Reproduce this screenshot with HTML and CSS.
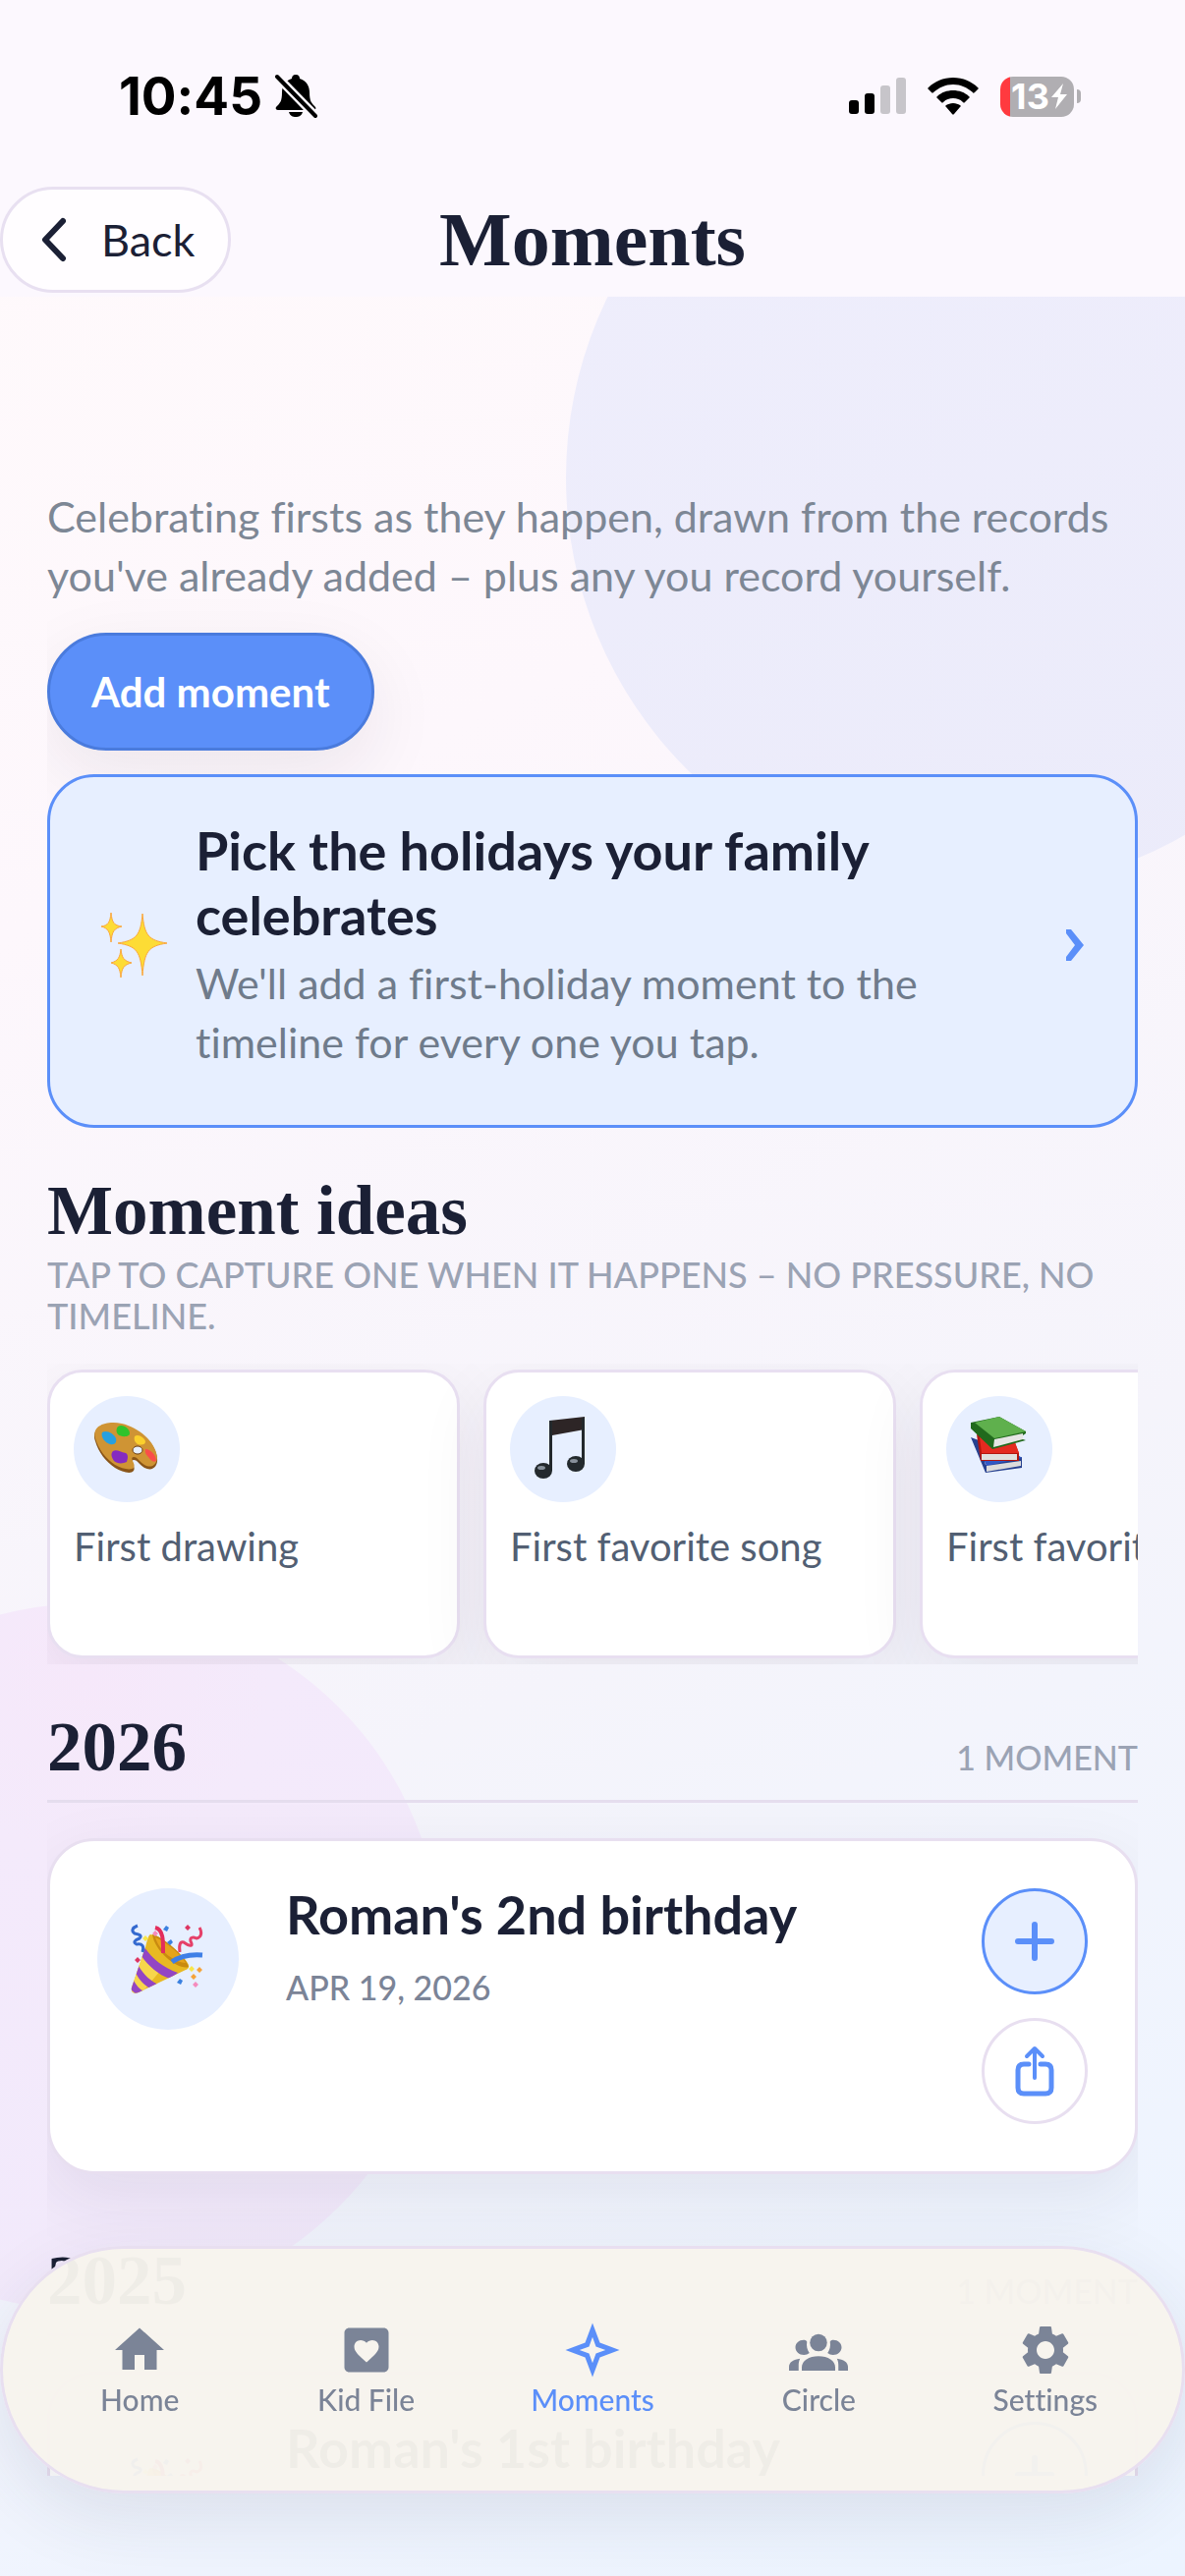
FILE: index.html
```html
<!DOCTYPE html>
<html lang="en">

<head>
    <meta charset="UTF-8">
    <meta name="viewport" content="width=device-width, initial-scale=1.0">
    <title>Moments</title>
    <link rel="stylesheet" href="styles.css">
</head>

<body>
    <div class="backdrop">
        <div class="blob blob-blue"></div>
        <div class="blob blob-pink"></div>
    </div>
    <div class="app">
        <header class="top">
            <div class="status">
                <div class="status-left">
                    <span class="time">10:45</span>
                    <svg width="44" height="46" viewBox="0 0 44 46">
                        <path d="M22 1c3 0 4 2 4 4 7 2 10 8 10 14 0 9 2 11 6 15 1 1 0 3-2 3H4c-2 0-3-2-2-3 4-4 6-6 6-15 0-6 3-12 10-14 0-2 1-4 4-4zM15 39h14c-1 4-4 5-7 5s-6-1-7-5z" />
                        <path class="slash" d="M3 3l39 40" />
                        <path class="slash-line" d="M3 3l39 40" />
                    </svg>
                </div>
                <div class="status-right">
                    <svg width="58" height="38" viewBox="0 0 58 38">
                        <rect x="0" y="23" width="10" height="14" rx="3" />
                        <rect x="16" y="16" width="10" height="21" rx="3" />
                        <rect x="32" y="8" width="10" height="29" rx="3" fill="#c7c5ca" />
                        <rect x="48" y="0" width="10" height="37" rx="3" fill="#c7c5ca" />
                    </svg>
                    <svg width="52" height="38" viewBox="0 0 52 38">
                        <path d="M26 0c10 0 19 4 25 10 1 1 1 1 0 2l-3 3c-1 1-2 1-2 0C40 10 34 7 26 7S12 10 6 15c-1 1-1 1-2 0l-3-3c-1-1-1-1 0-2C7 4 16 0 26 0z" />
                        <path d="M26 13c6 0 12 2 16 6 1 1 1 1 0 2l-4 4c-1 1-1 1-2 0-3-3-6-4-10-4s-7 1-10 4c-1 1-1 1-2 0l-4-4c-1-1-1-1 0-2 4-4 10-6 16-6z" />
                        <path d="M26 26c3 0 5 1 7 2 1 1 1 1 0 2l-6 7c-1 1-1 1-2 0l-6-7c-1-1-1-1 0-2 2-1 4-2 7-2z" />
                    </svg>
                    <div class="battery">
                        <span>13</span>
                        <svg width="16" height="26" viewBox="0 0 16 26">
                            <path d="M12 0L0 14h7L4 26l12-15H9z" fill="#fff" />
                        </svg>
                    </div>
                </div>
            </div>
            <div class="bar">
                <a class="back" href="#">
                    <svg width="30" height="46" viewBox="0 0 30 46">
                        <path d="M25 4L7 23l18 19" />
                    </svg>
                    Back
                </a>
                <h1>Moments</h1>
            </div>
        </header>

        <main class="content">
            <p class="intro">Celebrating firsts as they happen, drawn from the records you've already added – plus any you record yourself.</p>
            <button class="add" type="button">Add moment</button>

            <a class="pick" href="#">
                <svg width="78" height="78" viewBox="0 0 78 78">
                    <g class="spark">
                        <path d="M46 7c2 22 6 27 25 30-19 3-23 8-25 33-2-25-6-30-25-33 19-3 23-8 25-30z" />
                        <path d="M14 6c1 10 3 13 11 14-8 2-10 5-11 16-1-11-3-14-10-16 7-1 9-4 10-14z" />
                        <path d="M24 43c1 9 3 12 11 14-8 2-10 5-11 15-1-10-3-13-10-15 7-2 9-5 10-14z" />
                    </g>
                </svg>
                <div class="pick-text">
                    <h2>Pick the holidays your family celebrates</h2>
                    <p>We'll add a first-holiday moment to the timeline for every one you tap.</p>
                </div>
                <svg width="24" height="36" viewBox="0 0 24 36">
                    <path d="M2 2h5l13 16L7 34H2v-4l9-12L2 6z" fill="#5b8ff9" />
                </svg>
            </a>

            <section class="ideas">
                <h2>Moment ideas</h2>
                <p class="label">Tap to capture one when it happens – no pressure, no timeline.</p>
                <div class="rail">
                    <button class="idea" type="button">
                        <svg class="disc" viewBox="0 0 108 108">
                            <path d="M22 46C17 31 34 25 49 29c17 4 34 18 36 34 1 9-5 14-13 10-5-3-7-8-11-8-5 1 3 7 0 11-3 4-12 1-19-3-9-6-17-16-20-27z" fill="#8a5518" />
                            <path d="M22 43C18 29 35 25 49 28c17 4 34 18 36 34 0 8-6 12-13 8-5-3-7-8-11-8-5 1 3 7 0 11-3 3-12 1-19-3-9-6-17-16-20-27z" fill="#cf9434" />
                            <ellipse cx="65" cy="55" rx="5" ry="4" fill="#e7efff" stroke="#6b3f12" stroke-width="1" />
                            <path d="M29 37c4-3 12 1 14 6 1 4-1 7-6 6-5-1-10-8-8-12z" fill="#27a0e0" />
                            <path d="M45 31c5-3 12 2 12 7 0 4-9 4-12 1-2-2-2-6 0-8z" fill="#2fc32b" />
                            <path d="M62 41c4-3 10 2 11 5 0 4-4 4-8 3-3-2-4-5-3-8z" fill="#fbd02c" />
                            <path d="M40 56c4-2 7 1 13 2 3 2 2 6 1 9-4 2-10 2-13-1-2-3-4-7-1-10z" fill="#862bc0" />
                            <path d="M73 54c5 0 11 6 11 12-3 2-6-1-8-4-2-2-4-5-3-8z" fill="#fa4e49" />
                        </svg>
                        First drawing
                    </button>
                    <button class="idea" type="button">
                        <svg class="disc" viewBox="0 0 108 108">
                            <path d="M40 25l36-4v13l-33 6z" fill="#2d2526" />
                            <path d="M40 25h3v51h-3zM73 22h3v47h-3z" fill="#23282c" />
                            <ellipse cx="34" cy="76" rx="9" ry="8" fill="#23292d" />
                            <ellipse cx="67" cy="69" rx="9" ry="8" fill="#23292d" />
                            <ellipse cx="32" cy="73" rx="4" ry="2" fill="#87909a" />
                            <ellipse cx="65" cy="66" rx="4" ry="2" fill="#87909a" />
                        </svg>
                        First favorite song
                    </button>
                    <button class="idea" type="button">
                        <svg class="disc" viewBox="0 0 108 108">
                            <path d="M25 42l8 3 7 25 37-8v11L40 78z" fill="#27418f" />
                            <path d="M33 54l35 2 9 7-36 8z" fill="#3158c4" />
                            <path d="M41 71l35-5v5l-35 6z" fill="#dcdcdc" />
                            <path d="M31 39l39 9 4 10v8H35z" fill="#b3160f" />
                            <path d="M34 42l36 5 4 11H36z" fill="#e42a20" />
                            <path d="M36 59h36v6H36z" fill="#e0e0de" />
                            <path d="M25 27l29-6 27 15v2l-3 2v4l3 1-34 9-22-21z" fill="#216a1d" />
                            <path d="M29 27l25-6 27 15-32 7z" fill="#5fb04d" />
                            <path d="M49 44l29-6v6l-30 8z" fill="#e6e6e4" />
                        </svg>
                        First favorite book
                    </button>
                </div>
            </section>

            <section class="year">
                <div class="year-head">
                    <h2>2026</h2>
                    <span class="label">1 moment</span>
                </div>
                <article class="card">
                    <svg class="disc" viewBox="0 0 144 144">
                        <use href="#popper" />
                    </svg>
                    <div class="card-text">
                        <h3>Roman's 2nd birthday</h3>
                        <time datetime="2026-04-19">Apr 19, 2026</time>
                    </div>
                    <div class="actions">
                        <button class="round plus" type="button" aria-label="Add">
                            <svg width="48" height="48" viewBox="0 0 48 48">
                                <path d="M24 7v34M7 24h34" stroke-width="6" />
                            </svg>
                        </button>
                        <button class="round" type="button" aria-label="Share">
                            <svg width="48" height="54" viewBox="0 0 48 54">
                                <path d="M18 20h-5c-4 0-6 2-6 6v18c0 4 2 6 6 6h22c4 0 6-2 6-6V26c0-4-2-6-6-6h-5" stroke-width="5" stroke-linecap="butt" />
                                <path d="M24 34V5M16 12l8-8 8 8" stroke-width="4" />
                            </svg>
                        </button>
                    </div>
                </article>
            </section>

            <section class="year">
                <div class="year-head">
                    <h2>2025</h2>
                    <span class="label">1 moment</span>
                </div>
                <article class="card">
                    <svg class="disc" viewBox="0 0 144 144">
                        <use href="#popper" />
                    </svg>
                    <div class="card-text">
                        <h3>Roman's 1st birthday</h3>
                    </div>
                    <div class="actions">
                        <button class="round plus" type="button" aria-label="Add">
                            <svg width="48" height="48" viewBox="0 0 48 48">
                                <path d="M24 7v34M7 24h34" stroke-width="6" />
                            </svg>
                        </button>
                    </div>
                </article>
            </section>
        </main>
    </div>

    <nav class="tabs">
        <a href="#">
            <svg viewBox="0 0 24 24">
                <path d="M10 20v-6h4v6h5v-8h3L12 3 2 12h3v8z" />
            </svg>
            Home
        </a>
        <a href="#">
            <svg viewBox="0 0 24 24">
                <path fill-rule="evenodd" d="M5 3h14c1.1 0 2 .9 2 2v14c0 1.100-.9 2-2 2H5c-1.100 0-2-.9-2-2V5c0-1.100.9-2 2-2zM12 17l-.7-.6C8.600 14 7 12.500 7 10.600 7 9.100 8.200 8 9.600 8c.9 0 1.800.4 2.400 1.100C12.600 8.400 13.500 8 14.400 8 15.800 8 17 9.100 17 10.600c0 1.900-1.600 3.400-4.300 5.800z" />
            </svg>
            Kid File
        </a>
        <a class="current" href="#">
            <svg viewBox="0 0 24 24">
                <path fill-rule="evenodd" d="M12 1l3 8 8 3-8 3-3 8-3-8-8-3 8-3zM12 6.700L10.600 10.600 6.700 12l3.900 1.400L12 17.300l1.400-3.900L17.300 12l-3.900-1.400z" />
            </svg>
            Moments
        </a>
        <a href="#">
            <svg viewBox="0 0 24 24">
                <circle cx="12" cy="9" r="3.500" />
                <path d="M5.200 20.400v-1.400c0-2.600 2.900-4.500 6.800-4.500s6.800 1.900 6.800 4.500v1.400z" />
                <path d="M7.300 8.600c-.3 1.800.1 3.400 1 4.600-.6.500-1.400.8-2.200.8-2 0-3.500-1.400-3.500-3.100s1.500-3 3.300-3c.5 0 1 .1 1.400.7zM16.700 8.600c.3 1.800-.1 3.400-1 4.600.6.500 1.400.8 2.200.8 2 0 3.500-1.400 3.500-3.100s-1.500-3-3.300-3c-.5 0-1 .1-1.400.7z" />
                <path d="M4.500 15.500C1.800 15.800 0 17 0 18.800v1.600h3.900v-2c0-1.100.1-1.900.6-2.900zM19.500 15.500c2.700.3 4.500 1.500 4.500 3.300v1.600h-3.900v-2c0-1.100-.1-1.900-.6-2.900z" />
            </svg>
            Circle
        </a>
        <a href="#">
            <svg viewBox="0 0 24 24">
                <path d="M19.140 12.940c.04-.3.060-.61.060-.94 0-.32-.02-.64-.07-.94l2.030-1.580c.18-.14.23-.41.120-.61l-1.920-3.320c-.12-.22-.37-.29-.59-.22l-2.390.96c-.5-.38-1.030-.7-1.620-.94l-.36-2.540c-.04-.24-.24-.41-.48-.41h-3.840c-.24 0-.43.17-.47.41l-.36 2.540c-.59.24-1.130.57-1.620.94l-2.390-.96c-.22-.08-.47 0-.59.22L2.740 8.870c-.12.21-.08.47.12.61l2.030 1.580c-.05.3-.09.63-.09.94s.02.64.07.94l-2.030 1.580c-.18.14-.23.41-.12.61l1.920 3.320c.12.22.37.29.59.22l2.390-.96c.5.38 1.030.7 1.620.94l.36 2.540c.05.24.24.41.48.41h3.840c.24 0 .44-.17.47-.41l.36-2.540c.59-.24 1.130-.56 1.620-.94l2.390.96c.22.08.47 0 .59-.22l1.920-3.320c.12-.22.070-.47-.12-.61l-2.010-1.580zM12 15.600c-1.980 0-3.600-1.620-3.600-3.600s1.620-3.600 3.600-3.600 3.600 1.620 3.600 3.600-1.620 3.600-3.600 3.600z" />
            </svg>
            Settings
        </a>
    </nav>

    <!-- shared artwork -->
    <svg class="defs" width="0" height="0">
        <defs>
            <clipPath id="cone">
                <path d="M54 47c-2 1-3 5-5 13L35 101c-1 5 2 7 7 5l48-23c5-2 4-6-3-13-10-11-25-23-33-23z" />
            </clipPath>
            <g id="popper">
                <g clip-path="url(#cone)">
                    <path d="M30 40h70v70H30z" fill="#e8b923" />
                    <path d="M44 60l20 24-20 24-14-4z" fill="#f7d64c" />
                    <path d="M48 60c8 12 20 21 34 26l-8 6C62 88 52 79 45 69zM42 79c5 9 13 16 22 20l-8 4c-8-4-13-9-17-17zM37 94c3 5 6 9 11 11l-7 4-8-7z" fill="#9345c4" />
                </g>
                <path d="M56 47c9 1 34 22 37 33-9 4-34-14-37-33z" fill="#c98a10" />
                <path d="M59 50c9 3 27 18 31 26-12-1-27-12-31-26z" fill="#e6a41b" />
                <g fill="none" stroke-width="4">
                    <path d="M67 66c0-10 1-24-8-26" stroke="#e32d5c" />
                    <path d="M76 75c8-6 18-8 31-7" stroke="#3f7fe6" stroke-width="5" />
                    <path d="M41 38c-5 2-7 5-3 8 5 1 8 2 5 5-5 2-7 4-3 6 6-1 8 2 6 8" stroke="#3469cf" stroke-width="3" />
                    <path d="M84 65c-1-7 0-11 4-10 7 5 10 4 7-1-1-4 2-5 6-3 5-1 6-6 3-11" stroke="#e54069" stroke-width="3" />
                </g>
                <path d="M70 38l3 2-2 4-4-2zM75 52l2 3-3 3-3-3zM84 92l3 2-2 4-4-2z" fill="#3a80e0" />
                <path d="M49 48l3 3-3 3-3-3zM96 79l3 3-3 3-3-3z" fill="#f7e64a" />
                <path d="M92 37l3 3-3 3-3-3zM41 70l3 3-3 3-3-3z" fill="#dd3561" />
                <path d="M59 43l3 3-3 3-3-3zM100 95l3 3-3 3-3-3z" fill="#f58bbd" />
                <path d="M104 80l3 3-3 3-3-3zM98 87l3 3-3 3-3-3z" fill="#f5a33a" />
            </g>
        </defs>
    </svg>
</body>

</html>
```
FILE: styles.css
```css
* {
    box-sizing: border-box;
    margin: 0;
    padding: 0;
}

body {
    position: relative;
    height: 100vh;
    overflow: hidden;
    background: linear-gradient(155deg, #fffafb 0%, #fdf7fc 30%, #f5f4fb 62%, #eff4fe 85%, #ecf4ff 100%);
    color: #1b2035;
    font-family: Lato, "Open Sans", sans-serif;
    font-size: 43px;
    font-variant-ligatures: none;
    line-height: 60px;
}

a {
    color: inherit;
    text-decoration: none;
}

button {
    font: inherit;
    cursor: pointer;
}

svg {
    flex-shrink: 0;
}

/* background shapes */
.backdrop {
    position: absolute;
    inset: 0;
    overflow: hidden;
}

.blob {
    position: absolute;
    border-radius: 50%;
}

.blob-blue {
    top: 66px;
    right: -210px;
    width: 840px;
    height: 840px;
    background: linear-gradient(160deg, #efeefc, #ebebfa);
}

.blob-pink {
    bottom: 270px;
    left: -270px;
    width: 720px;
    height: 720px;
    background: radial-gradient(circle at 50% 10%, #f6e8fa, #f4eafb 25%, #f1e9fb);
}

.defs {
    position: absolute;
}

.app {
    position: relative;
    display: flex;
    flex-direction: column;
    height: 100%;
    padding-bottom: 102px;
}

/* status bar and title */
.top {
    background: #fcf8fe;
    padding-bottom: 4px;
}

.status {
    display: flex;
    justify-content: space-between;
    align-items: center;
    height: 190px;
    padding: 6px 106px 0 121px;
}

.status-left,
.status-right {
    display: flex;
    align-items: center;
    gap: 22px;
}

.status-left {
    gap: 12px;
}

.time {
    color: #000;
    font-family: Inter, sans-serif;
    font-size: 53px;
    font-weight: 700;
}

.slash {
    stroke: #fcf8fe;
    stroke-width: 9;
}

.slash-line {
    stroke: #000;
    stroke-width: 4;
    stroke-linecap: round;
}

.battery {
    position: relative;
    display: flex;
    align-items: center;
    justify-content: center;
    gap: 2px;
    width: 75px;
    height: 41px;
    margin-right: 7px;
    padding-left: 4px;
    border-radius: 13px;
    background: linear-gradient(90deg, #ff3a3f 10px, #b0aeb2 10px);
    color: #fff;
    font-family: Inter, sans-serif;
    font-size: 36px;
    font-weight: 700;
}

.battery::after {
    content: "";
    position: absolute;
    right: -7px;
    width: 4px;
    height: 14px;
    border-radius: 0 4px 4px 0;
    background: #b0aeb2;
}

.bar {
    display: grid;
    grid-template-columns: 1fr auto 1fr;
    align-items: center;
}

.back {
    display: flex;
    align-items: center;
    justify-self: start;
    gap: 34px;
    height: 108px;
    padding: 0 34px 0 36px;
    border: 3px solid #e8e0f1;
    border-radius: 54px;
    background: #fffdff;
    font-size: 45px;
}

.back path {
    fill: none;
    stroke: #1b2035;
    stroke-width: 6;
    stroke-linecap: round;
    stroke-linejoin: round;
}

h1,
.ideas h2,
.year-head h2 {
    font-family: "Liberation Serif", serif;
    font-weight: 700;
}

h1 {
    font-size: 78px;
    line-height: 84px;
}

.ideas h2,
.year-head h2 {
    font-size: 71px;
    line-height: 84px;
}

.content {
    flex: 1;
    min-height: 0;
    margin: 0 48px;
    padding-top: 194px;
    overflow: hidden;
}

.intro {
    color: #7d8795;
}

.add {
    display: block;
    height: 120px;
    margin: 28px 0 24px;
    padding: 0 42px;
    border: 3px solid #4a7bdd;
    border-radius: 60px;
    background: #5b8ff9;
    box-shadow: 0 24px 72px rgba(40, 30, 50, .08);
    color: #fff;
    font-size: 42px;
    font-weight: 700;
}

.pick {
    display: flex;
    align-items: center;
    gap: 22px;
    padding: 42px 48px 54px;
    border: 3px solid #5b8ff9;
    border-radius: 48px;
    background: #e7efff;
}

.spark {
    fill: #fddc35;
    stroke: #fba73f;
    stroke-width: 1;
}

.pick-text {
    flex: 1;
}

.pick h2 {
    margin-bottom: 6px;
    font-size: 54px;
    line-height: 66px;
}

.pick p {
    color: #6f7b8b;
}

.label {
    color: #9ba3b4;
    font-size: 36px;
    font-weight: 500;
    line-height: 42px;
    text-transform: uppercase;
}

.ideas {
    margin: 42px 0;
}

.ideas .label {
    margin: 2px 0 28px;
}

.rail {
    display: flex;
    gap: 24px;
    padding: 6px 0;
    overflow: hidden;
}

.idea {
    display: flex;
    flex: none;
    flex-direction: column;
    align-items: flex-start;
    gap: 21px;
    width: 420px;
    height: 294px;
    padding: 24px;
    border: 3px solid #e8dff1;
    border-radius: 36px;
    background: #fff;
    box-shadow: 0 24px 72px rgba(40, 30, 50, .07);
    color: #525f73;
    font-size: 40px;
    line-height: 48px;
    text-align: left;
}

.disc {
    width: 108px;
    height: 108px;
    border-radius: 50%;
    background: #e7efff;
}

/* timeline */
.year {
    margin-bottom: 66px;
}

.year-head {
    display: flex;
    justify-content: space-between;
    align-items: baseline;
    margin-bottom: 36px;
    padding-bottom: 12px;
    border-bottom: 3px solid #e5ddee;
}

.year-head .label {
    font-size: 34px;
}

.card {
    display: flex;
    align-items: flex-start;
    gap: 48px;
    padding: 48px;
    border: 3px solid #e8dff0;
    border-radius: 48px;
    background: #fff;
    box-shadow: 0 24px 72px rgba(40, 40, 60, .08);
}

.card .disc {
    width: 144px;
    height: 144px;
}

.card-text {
    flex: 1;
}

.card h3 {
    margin-bottom: 26px;
    font-size: 54px;
    line-height: 54px;
}

.card time {
    display: block;
    color: #7b8497;
    font-size: 34px;
    font-weight: 500;
    line-height: 42px;
    text-transform: uppercase;
}

.actions {
    display: flex;
    flex-direction: column;
    gap: 24px;
}

.round {
    display: flex;
    align-items: center;
    justify-content: center;
    width: 108px;
    height: 108px;
    border: 3px solid #e8dff0;
    border-radius: 50%;
    background: #fff;
}

.round path {
    fill: none;
    stroke: #5b8ff9;
    stroke-linecap: round;
    stroke-linejoin: round;
}

.plus {
    border-color: #5b8ff9;
    background: #e7efff;
}

/* bottom navigation floats over the timeline */
.tabs {
    position: fixed;
    right: 0;
    bottom: 84px;
    left: 0;
    display: flex;
    align-items: center;
    height: 252px;
    padding: 0 24px;
    border: 3px solid #e8dff0;
    border-radius: 126px;
    background: rgba(247, 244, 237, .97);
    box-shadow: 0 24px 72px rgba(40, 50, 70, .1);
}

.tabs a {
    display: flex;
    flex: 1;
    flex-direction: column;
    align-items: center;
    color: #7b8497;
    font-size: 30px;
    font-weight: 500;
    line-height: 40px;
}

.tabs svg {
    width: 60px;
    height: 60px;
    fill: currentColor;
}

.tabs .current {
    color: #5b8ff9;
}
```
